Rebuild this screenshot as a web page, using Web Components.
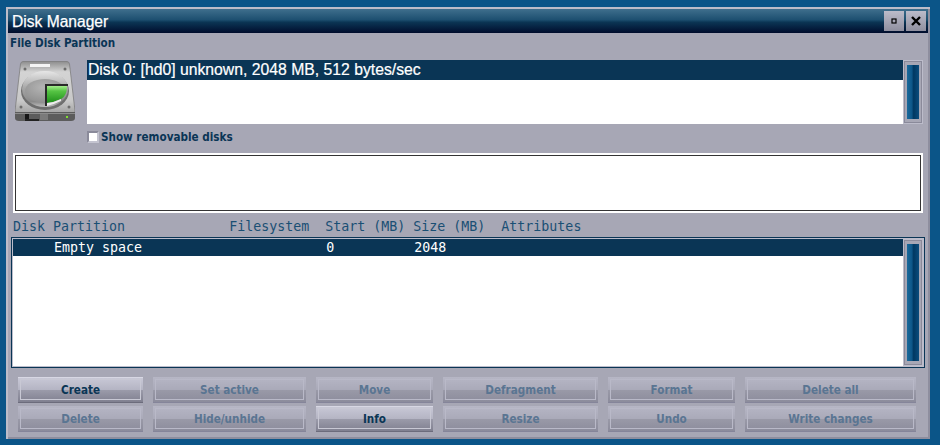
<!DOCTYPE html>
<html>
<head>
<meta charset="utf-8">
<title>Disk Manager</title>
<style>
html, body { margin: 0; height: 445px; overflow: hidden; background: #0b5588; }
body { padding: 7px 0 0 6px; box-sizing: border-box; font-family: "Liberation Sans", sans-serif; }
</style>
</head>
<body>
<disk-window title-text="Disk Manager">
  <span slot="menu">File Disk Partition</span>
  <disk-selector>
    <list-row selected>Disk 0: [hd0] unknown, 2048 MB, 512 bytes/sec</list-row>
  </disk-selector>
  <check-label>Show removable disks</check-label>
  <partition-canvas></partition-canvas>
  <partition-table>
    <list-row selected mono>     Empty space                       0          2048</list-row>
  </partition-table>
  <button-grid>
    <win-button active>Create</win-button>
    <win-button>Set active</win-button>
    <win-button>Move</win-button>
    <win-button>Defragment</win-button>
    <win-button>Format</win-button>
    <win-button>Delete all</win-button>
    <win-button>Delete</win-button>
    <win-button>Hide/unhide</win-button>
    <win-button active>Info</win-button>
    <win-button>Resize</win-button>
    <win-button>Undo</win-button>
    <win-button>Write changes</win-button>
  </button-grid>
</disk-window>

<script>
const BOLD_FONT = `"DejaVu Sans Condensed", "Liberation Sans", sans-serif`;

class DiskWindow extends HTMLElement {
    constructor(){
        super();
        this.attachShadow({ mode: 'open' });
        this.shadowRoot.innerHTML = /*html*/`
        <style>
            :host {
                display: block;
                box-sizing: border-box;
                width: 924px;
                height: 432px;
                padding: 2px;
                background: #a7a7b5;
                box-shadow: inset 2px 2px 0 #bdbdc9, inset -2px -2px 0 #8e8e9e;
            }
            .title {
                height: 24px;
                display: flex;
                align-items: center;
                justify-content: space-between;
                padding: 0 2px 0 4px;
                background: linear-gradient(#3f6f8d 0, #1d4f70 45%, #0b3554 55%, #000c2c 100%);
                color: #fff;
                font-size: 15.6px;
                -webkit-text-stroke: 0.25px #fff;
            }
            #t { margin-top: 1px; }
            .controls { display: flex; gap: 2px; }
            .ctl {
                width: 20px;
                height: 20px;
                display: flex;
                align-items: center;
                justify-content: center;
                background: linear-gradient(#bcbcca, #8f8f9f);
            }
            .menu {
                height: 19px;
                line-height: 20px;
                padding-left: 2px;
                color: #0a3555;
                font-family: ${BOLD_FONT};
                font-size: 11.6px;
                font-weight: 700;
            }
        </style>
        <div class="title">
            <span id="t"></span>
            <div class="controls">
                <div class="ctl"><svg width="6" height="6" viewBox="0 0 6 6"><rect x="1" y="1" width="4" height="4" fill="none" stroke="#000" stroke-width="1.2"/></svg></div>
                <div class="ctl"><svg width="10" height="10" viewBox="0 0 10 10"><path d="M1 1 9 9M9 1 1 9" stroke="#000" stroke-width="2.4" fill="none"/></svg></div>
            </div>
        </div>
        <div class="menu"><slot name="menu"></slot></div>
        <slot></slot>
        `;
        this.shadowRoot.getElementById('t').textContent = this.getAttribute('title-text');
    }
}

class ListRow extends HTMLElement {
    constructor(){
        super();
        this.attachShadow({ mode: 'open' });
        this.shadowRoot.innerHTML = /*html*/`
        <style>
            :host {
                display: block;
                height: 20px;
                line-height: 20px;
                padding-left: 1px;
                font-size: 15.75px;
                color: #fff;
                -webkit-text-stroke: 0.2px #fff;
            }
            :host([selected]) { background: #0a3555; }
            :host([mono]) {
                height: 17px;
                line-height: 17px;
                font-family: "DejaVu Sans Mono", monospace;
                font-size: 13.3px;
                -webkit-text-stroke: 0;
            }
            span { white-space: pre; }
        </style>
        <span><slot></slot></span>
        `;
    }
}

class ScrollBar extends HTMLElement {
    constructor(){
        super();
        this.attachShadow({ mode: 'open' });
        this.shadowRoot.innerHTML = /*html*/`
        <style>
            :host {
                display: block;
                box-sizing: border-box;
                width: 20px;
                padding: 1px;
                background: #bcbcca;
            }
            .track {
                box-sizing: border-box;
                height: 100%;
                padding: 3px 2px;
                border: 1px solid #8a8a9a;
                background: #a7a7b5;
                display: flex;
            }
            .thumb {
                flex: 1;
                background: linear-gradient(90deg, #1a6a9c 0, #0d5688 40%, #003862 55%, #0a4c7c 100%);
            }
        </style>
        <div class="track"><div class="thumb"></div></div>
        `;
    }
}

class DiskSelector extends HTMLElement {
    constructor(){
        super();
        this.attachShadow({ mode: 'open' });
        this.shadowRoot.innerHTML = /*html*/`
        <style>
            :host {
                display: flex;
                height: 64px;
                margin-top: 8px;
                padding-left: 7px;
            }
            .icon { width: 60px; height: 62px; margin: 1px 12px 0 0; filter: blur(.35px); }
            .list { flex: 1; background: #fff; }
            scroll-bar { margin-right: 5px; }
        </style>
        <svg class="icon" viewBox="0 0 60 62">
            <defs>
                <linearGradient id="case" x1="0" y1="0" x2="0" y2="1">
                    <stop offset="0" stop-color="#8e8e8e"/>
                    <stop offset="0.2" stop-color="#d4d4d4"/>
                    <stop offset="0.75" stop-color="#c8c8c8"/>
                    <stop offset="1" stop-color="#a0a0a0"/>
                </linearGradient>
                <linearGradient id="disc" x1="0" y1="0" x2="0" y2="1">
                    <stop offset="0" stop-color="#e6e6e6"/>
                    <stop offset="0.5" stop-color="#a4a4a4"/>
                    <stop offset="0.85" stop-color="#8a8a8a"/>
                    <stop offset="1" stop-color="#c0c0c0"/>
                </linearGradient>
                <radialGradient id="platter" cx="0.45" cy="0.35" r="0.7">
                    <stop offset="0" stop-color="#b4b4b4"/>
                    <stop offset="1" stop-color="#8c8c8c"/>
                </radialGradient>
                <linearGradient id="slice" x1="0" y1="0" x2="0" y2="1">
                    <stop offset="0" stop-color="#a4ec8c"/>
                    <stop offset="0.3" stop-color="#56c444"/>
                    <stop offset="1" stop-color="#1e8e1a"/>
                </linearGradient>
            </defs>
            <path d="M8 .5H52Q54 .5 54.500 3L60 50Q60 53 58 53H2Q0 53 0 50L5.500 3Q6 .5 8 .5Z" fill="url(#case)" stroke="#7e7e7e" stroke-width=".8"/>
            <path d="M0 51H60V57Q60 60 56 60H4Q0 60 0 57Z" fill="#5c5c5c"/>
            <path d="M0 52H60V53H0Z" fill="#8c8c8c"/>
            <path d="M10 53H14V59H10Z" fill="#151515"/>
            <path d="M10 58H24V60H10Z" fill="#222"/>
            <path d="M25 53H33V59H25Z" fill="#7a7a7a"/>
            <rect x="51" y="55" width="2" height="2" fill="#7fe030"/>
            <rect x="15" y="3" width="20" height="3" fill="#f4f4f4"/>
            <ellipse cx="30" cy="30" rx="24" ry="19" fill="#6e6e6e"/>
            <ellipse cx="30" cy="28" rx="23" ry="18" fill="url(#disc)"/>
            <ellipse cx="30" cy="30" rx="20" ry="12" fill="url(#platter)"/>
            <path d="M30 23H53V25H32V45H30Z" fill="#2a2a2a"/>
            <path d="M32 25H52Q52 35 46 38Q40 41 32 42Z" fill="url(#slice)"/>
            <path d="M32 42Q40 41 46 38L46 40Q40 43 32 45Z" fill="#ececec"/>
            <circle cx="6" cy="46" r="1.500" fill="#6c6c6c"/><circle cx="54" cy="46" r="1.500" fill="#6c6c6c"/>
            <circle cx="10" cy="8" r="1.500" fill="#6c6c6c"/><circle cx="50" cy="8" r="1.500" fill="#6c6c6c"/>
        </svg>
        <div class="list"><slot></slot></div>
        <scroll-bar></scroll-bar>
        `;
    }
}

class CheckLabel extends HTMLElement {
    constructor(){
        super();
        this.attachShadow({ mode: 'open' });
        this.shadowRoot.innerHTML = /*html*/`
        <style>
            :host {
                display: flex;
                align-items: center;
                gap: 2px;
                height: 14px;
                margin: 6px 0 0 79px;
                color: #0a3555;
                font-family: ${BOLD_FONT};
                font-size: 11.6px;
                font-weight: 700;
            }
            .box {
                box-sizing: border-box;
                width: 12px;
                height: 12px;
                background: #fff;
                border: 2px solid;
                border-color: #8a8a9a #c4c4d0 #c4c4d0 #8a8a9a;
            }
        </style>
        <div class="box"></div>
        <span><slot></slot></span>
        `;
    }
}

class PartitionCanvas extends HTMLElement {
    constructor(){
        super();
        this.attachShadow({ mode: 'open' });
        this.shadowRoot.innerHTML = /*html*/`
        <style>
            :host {
                display: block;
                box-sizing: border-box;
                height: 60px;
                margin: 9px 5px 0 5px;
                padding: 2px;
                background: #fff;
            }
            div { box-sizing: border-box; height: 100%; background: #fff; border: 1px solid #333; }
        </style>
        <div></div>
        `;
    }
}

class PartitionTable extends HTMLElement {
    constructor(){
        super();
        this.attachShadow({ mode: 'open' });
        this.shadowRoot.innerHTML = /*html*/`
        <style>
            :host { display: block; margin: 0 3px 0 3px; }
            .head {
                height: 24px;
                padding-left: 2px;
                line-height: 28px;
                font-family: "DejaVu Sans Mono", monospace;
                font-size: 13.3px;
                color: #1a4f74;
                white-space: pre;
            }
            .frame {
                box-sizing: border-box;
                height: 131px;
                display: flex;
                padding: 1px;
                border: 1px solid #0a3555;
                background: #bcbcca;
            }
            .list { flex: 1; background: #fff; }
        </style>
        <div class="head">Disk Partition             Filesystem  Start (MB) Size (MB)  Attributes</div>
        <div class="frame">
            <div class="list"><slot></slot></div>
            <scroll-bar></scroll-bar>
        </div>
        `;
    }
}

class ButtonGrid extends HTMLElement {
    constructor(){
        super();
        this.attachShadow({ mode: 'open' });
        this.shadowRoot.innerHTML = /*html*/`
        <style>
            :host {
                display: grid;
                grid-template-columns: 125px 153px 117px 155px 127px 171px;
                grid-auto-rows: 26px;
                column-gap: 10px;
                row-gap: 3px;
                margin: 9px 0 0 10px;
            }
        </style>
        <slot></slot>
        `;
    }
}

class WinButton extends HTMLElement {
    constructor(){
        super();
        this.attachShadow({ mode: 'open' });
        this.shadowRoot.innerHTML = /*html*/`
        <style>
            :host {
                display: block;
                box-sizing: border-box;
                padding: 2px;
                color: #5a7592;
                font-family: ${BOLD_FONT};
                font-size: 11.6px;
                font-weight: 700;
                background: linear-gradient(#b6b6c5 0, #aaaab9 50%, #9a9aa8 50%, #8c8c9c 100%);
                border-bottom: 1px solid #85859a;
            }
            :host([active]) {
                color: #0a3555;
                background: linear-gradient(#c8c8d6 0, #b4b4c3 50%, #9b9baa 50%, #808090 100%);
                border-top: 1px solid #d8d8e4;
                border-bottom: 1px solid #6c6c7c;
                padding-top: 1px;
            }
            div {
                box-sizing: border-box;
                height: 100%;
                display: flex;
                align-items: center;
                justify-content: center;
                border: 1px solid #b9b9c8;
            }
            :host([active]) div { border-color: #c8c8d4; }
        </style>
        <div><slot></slot></div>
        `;
    }
}

customElements.define("disk-window", DiskWindow);
customElements.define("list-row", ListRow);
customElements.define("scroll-bar", ScrollBar);
customElements.define("disk-selector", DiskSelector);
customElements.define("check-label", CheckLabel);
customElements.define("partition-canvas", PartitionCanvas);
customElements.define("partition-table", PartitionTable);
customElements.define("button-grid", ButtonGrid);
customElements.define("win-button", WinButton);
</script>
</body>
</html>
